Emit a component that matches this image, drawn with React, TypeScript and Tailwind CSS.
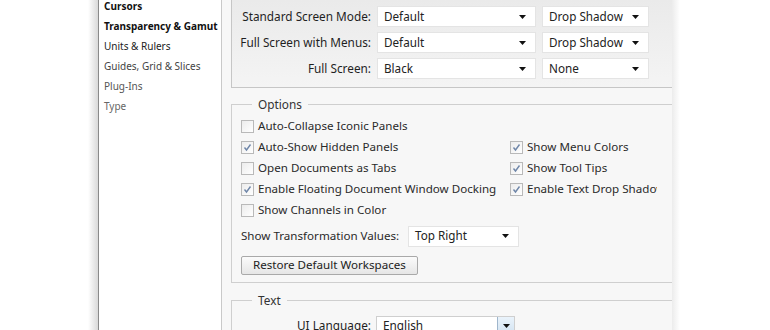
const font = { fontFamily: '"Noto Sans", "Open Sans", sans-serif' }

function Caret({ className = '' }: { className?: string }) {
  return (
    <svg width="7" height="4" viewBox="0 0 7 4" className={className}>
      <path d="M0 0h7L3.5 4z" fill="#111" />
    </svg>
  )
}

function Select({ value, w, muted }: { value: string; w: string; muted?: boolean }) {
  return (
    <div
      className={`${w} h-[21px] flex items-center justify-between pl-[6px] pr-[9px] bg-white border border-[#e4e4e4] text-[11.7px] ${
        muted ? 'text-[#444]' : 'text-[#222]'
      }`}
    >
      <span>{value}</span>
      <Caret />
    </div>
  )
}

function Check({ label, checked }: { label: string; checked?: boolean }) {
  return (
    <div className="h-[21px] flex items-center gap-[4px] text-[11.6px] text-[#2a2a2a] whitespace-nowrap">
      <span className="shrink-0 w-[13px] h-[13px] border border-[#b9b9b9] bg-gradient-to-br from-[#ececec] to-white flex items-center justify-center">
        {checked && (
          <svg width="9" height="9" viewBox="0 0 9 9">
            <path d="M1.5 4.5l2 2.5 4-5.5" stroke="#6f86a8" strokeWidth="1.4" fill="none" />
          </svg>
        )}
      </span>
      <span>{label}</span>
    </div>
  )
}

const nav = [
  { label: 'Cursors', cls: 'font-bold text-[#111]' },
  { label: 'Transparency & Gamut', cls: 'font-bold text-[#111]' },
  { label: 'Units & Rulers', cls: 'text-[#222]' },
  { label: 'Guides, Grid & Slices', cls: 'text-[#444]' },
  { label: 'Plug-Ins', cls: 'text-[#555]' },
  { label: 'Type', cls: 'text-[#666]' },
]

export default function App() {
  return (
    <div className="w-[770px] h-[330px] overflow-hidden bg-white flex" style={font}>
      <div className="w-[88px] shrink-0" />
      <div className="w-[10px] shrink-0 bg-gradient-to-r from-white to-[#d9d9d9]" />
      {/* category list */}
      <div className="w-[124px] shrink-0 bg-white border-l border-[#8a8a8a] border-r border-r-[#c9c9c9] pl-[5px] -mt-[4px]">
        {nav.map((n) => (
          <div key={n.label} className={`h-[20px] leading-[20px] text-[10px] whitespace-nowrap ${n.cls}`}>
            {n.label}
          </div>
        ))}
      </div>

      {/* preference pane */}
      <div className="w-[458px] shrink-0 bg-[#f7f7f7] pl-[9px] pr-[7px] flex flex-col">
        <div className="-mt-[10px] border border-[#c6c6c6] bg-gradient-to-b from-[#e9e9e9] to-[#f4f4f4] pt-[15px] pb-[8px] flex flex-col gap-[5px]">
          {[
            ['Standard Screen Mode:', 'Default', 'Drop Shadow'],
            ['Full Screen with Menus:', 'Default', 'Drop Shadow'],
            ['Full Screen:', 'Black', 'None'],
          ].map(([l, a, b]) => (
            <div key={l} className="flex items-center">
              <div className="w-[145px] text-right pr-[6px] text-[11.8px] text-[#1f1f1f]">{l}</div>
              <Select value={a} w="w-[159px]" />
              <div className="w-[6px]" />
              <Select value={b} w="w-[107px]" />
            </div>
          ))}
        </div>

        <fieldset className="mt-[8px] border border-[#cfcfcf] px-[9px] pb-[8px] h-[187px]">
          <legend className="ml-[11px] px-[6px] text-[11.8px] text-[#333]">Options</legend>
          <div className="flex mt-[2px]">
            <div className="w-[269px]">
              <Check label="Auto-Collapse Iconic Panels" />
              <Check label="Auto-Show Hidden Panels" checked />
              <Check label="Open Documents as Tabs" />
              <Check label="Enable Floating Document Window Docking" checked />
              <Check label="Show Channels in Color" />
            </div>
            <div className="pt-[21px] overflow-hidden w-[147px]">
              <Check label="Show Menu Colors" checked />
              <Check label="Show Tool Tips" checked />
              <Check label="Enable Text Drop Shadow" checked />
            </div>
          </div>
          <div className="flex items-center mt-[5px]">
            <span className="text-[11.6px] text-[#2a2a2a] w-[167px]">Show Transformation Values:</span>
            <Select value="Top Right" w="w-[111px]" />
          </div>
          <button className="mt-[9px] h-[19px] px-[11px] border border-[#a9a9a9] rounded-[2px] bg-gradient-to-b from-[#fbfbfb] to-[#e6e6e6] text-[11.6px] text-[#222] leading-none">
            Restore Default Workspaces
          </button>
        </fieldset>

        <fieldset className="mt-[9px] border border-[#cfcfcf] px-[9px] h-[60px]">
          <legend className="ml-[11px] px-[6px] text-[11.8px] text-[#333]">Text</legend>
          <div className="flex items-center mt-[6px]">
            <div className="w-[135px] text-right pr-[5px] text-[11.8px] text-[#1f1f1f]">UI Language:</div>
            <div className="w-[139px] h-[21px] flex items-center justify-between pl-[6px] bg-white border border-[#cfcfcf] text-[11.8px] text-[#222]">
              <span>English</span>
              <span className="w-[17px] h-full border-l border-[#9fb6cc] bg-gradient-to-b from-[#eaf3fb] to-[#cfe1f0] flex items-center justify-center">
                <Caret />
              </span>
            </div>
          </div>
        </fieldset>
      </div>
      <div className="w-[8px] shrink-0 bg-gradient-to-r from-[#ececec] to-white -ml-[8px]" />
    </div>
  )
}
